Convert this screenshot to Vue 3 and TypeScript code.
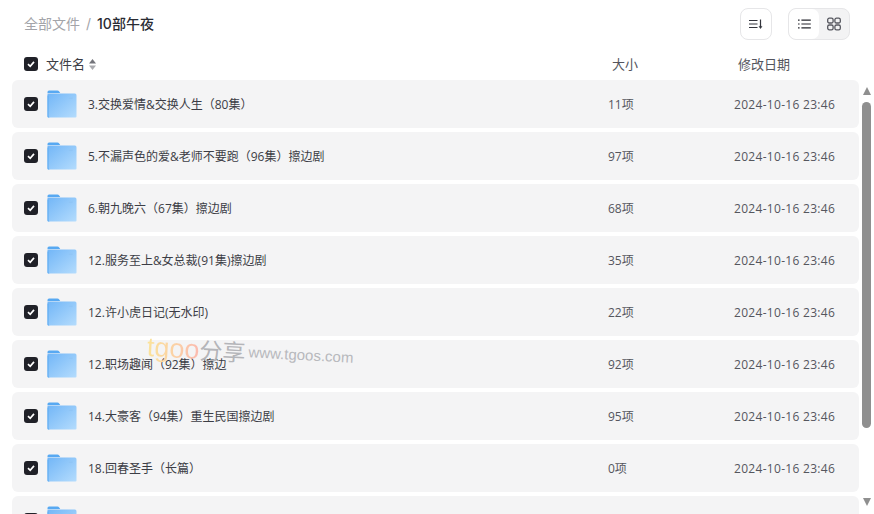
<script setup lang="ts">
interface Row {
  name: string;
  count: string;
}

const date = "2024-10-16 23:46";

const rows: Row[] = [
  { name: "3.交换爱情&交换人生（80集）", count: "11项" },
  { name: "5.不漏声色的爱&老师不要跑（96集）擦边剧", count: "97项" },
  { name: "6.朝九晚六（67集）擦边剧", count: "68项" },
  { name: "12.服务至上&女总裁(91集)擦边剧", count: "35项" },
  { name: "12.许小虎日记(无水印)", count: "22项" },
  { name: "12.职场趣闻（92集）擦边", count: "92项" },
  { name: "14.大豪客（94集）重生民国擦边剧", count: "95项" },
  { name: "18.回春圣手（长篇）", count: "0项" },
  { name: "", count: "" },
];
</script>

<template>
  <div class="page">
    <header class="topbar">
      <nav class="crumbs">
        <span class="crumb-root">全部文件</span>
        <span class="crumb-sep">/</span>
        <span class="crumb-cur">10部午夜</span>
      </nav>
      <div class="tools">
        <button class="tool-btn sort-btn" type="button">
          <svg width="14" height="10" viewBox="0 0 14 10" fill="none" stroke="#33343c" stroke-width="1.2">
            <path d="M0 1.5h8.5M0 5h8.5M0 8.5h8.5" />
            <path d="M11.5 0.5v7.5" />
            <path d="M10 7.4 11.5 9.6 13 7.4z" fill="#33343c" stroke-width="0.5" />
          </svg>
        </button>
        <div class="view-switch">
          <span class="view-item active">
            <svg width="13" height="10" viewBox="0 0 13 10" fill="none" stroke="#26272e" stroke-width="1.2">
              <path d="M3.4 1.2h9.4M3.4 5h9.4M3.4 8.8h9.4" />
              <path d="M0 1.2h1.6M0 5h1.6M0 8.8h1.6" />
            </svg>
          </span>
          <span class="view-item">
            <svg width="14" height="14" viewBox="0 0 14 14" fill="none" stroke="#55565e" stroke-width="1.3">
              <rect x="0.7" y="1.2" width="5.4" height="4.8" rx="1.6" />
              <rect x="7.9" y="1.2" width="5.4" height="4.8" rx="1.6" />
              <rect x="0.7" y="8" width="5.4" height="4.8" rx="1.6" />
              <rect x="7.9" y="8" width="5.4" height="4.8" rx="1.6" />
            </svg>
          </span>
        </div>
      </div>
    </header>

    <div class="col-head">
      <span class="check">
        <svg width="10" height="10" viewBox="0 0 10 10"><path d="M2 5.2 4.2 7.3 8 2.9" fill="none" stroke="#fff" stroke-width="1.7" /></svg>
      </span>
      <span class="col-name">
        文件名
        <svg class="sort-caret" width="7" height="11" viewBox="0 0 7 11">
          <path d="M3.5 0 7 4.6H0z" fill="#73747a" />
          <path d="M3.5 11 7 6.4H0z" fill="#a9aaae" />
        </svg>
      </span>
      <span class="col-size">大小</span>
      <span class="col-date">修改日期</span>
    </div>

    <div class="body">
      <ul class="list">
        <li v-for="(row, i) in rows" :key="i" class="row">
          <span class="check">
            <svg width="10" height="10" viewBox="0 0 10 10"><path d="M2 5.2 4.2 7.3 8 2.9" fill="none" stroke="#fff" stroke-width="1.7" /></svg>
          </span>
          <svg class="folder" width="30" height="28" viewBox="0 0 30 28">
            <defs>
              <linearGradient id="fold" x1="0" y1="0" x2="1" y2="1">
                <stop offset="0" stop-color="#72b6f7" />
                <stop offset="1" stop-color="#b4dcfd" />
              </linearGradient>
            </defs>
            <path d="M0.5 2a1.5 1.5 0 0 1 1.5-1.5h8.4c.8 0 1.3.3 1.8 1l1 1.5h-12.7z" fill="#58a9f2" />
            <path d="M0.5 3.6h27.4a1.6 1.6 0 0 1 1.6 1.6v21.2a1.1 1.1 0 0 1-1.1 1.1h-26.8a1.1 1.1 0 0 1-1.1-1.1z" fill="url(#fold)" />
            <path d="M0.5 5.5v20.9a1.1 1.1 0 0 0 1.1 1.1h1.2c-1-.2-1.3-.9-1.3-2v-20z" fill="#5aa9f1" />
            <rect x="22" y="7.5" width="3.6" height="1.4" fill="#8fc5f6" />
          </svg>
          <span class="row-name">{{ row.name }}</span>
          <span class="row-size">{{ row.count }}</span>
          <span v-if="row.count" class="row-date">{{ date }}</span>
        </li>
      </ul>
      <div class="scrollbar">
        <span class="arrow up"></span>
        <span class="thumb"></span>
        <span class="arrow down"></span>
      </div>
    </div>

    <div class="watermark">
      <span class="wm-tgoo">tgoo</span><span class="wm-cn">分享</span>
      <span class="wm-url">www.tgoos.com</span>
    </div>
  </div>
</template>

<style>
html,
body {
  margin: 0;
  overflow: hidden;
  background: #fff;
}
</style>

<style scoped>
.page {
  position: relative;
  width: 874px;
  height: 514px;
  overflow: hidden;
  font-family: Inter, "Noto Sans CJK SC", sans-serif;
  color: #33343c;
}

.topbar {
  display: flex;
  justify-content: space-between;
  align-items: center;
  height: 48px;
  padding: 0 24px;
  box-sizing: border-box;
}

.crumbs {
  display: flex;
  align-items: center;
  padding-bottom: 2px;
  font-size: 14px;
}

.crumb-root {
  color: #a3a4a9;
}

.crumb-sep {
  margin: 0 6px;
  color: #a3a4a9;
}

.crumb-cur {
  color: #2a2b33;
  font-weight: 500;
}

.tools {
  display: flex;
  align-items: center;
  gap: 16px;
}

.tool-btn {
  display: flex;
  align-items: center;
  justify-content: center;
  width: 32px;
  height: 32px;
  padding: 0;
  background: #fff;
  border: 1px solid #e6e6e8;
  border-radius: 8px;
}

.view-switch {
  display: flex;
  box-sizing: border-box;
  width: 62px;
  height: 32px;
  background: #f3f3f4;
  border: 1px solid #e6e6e8;
  border-radius: 8px;
  overflow: hidden;
}

.view-item {
  flex: 1;
  display: flex;
  align-items: center;
  justify-content: center;
}

.view-item.active {
  background: #fff;
  border-radius: 7px;
}

.col-head {
  display: flex;
  align-items: center;
  height: 32px;
  padding-left: 24px;
  font-size: 13px;
  color: #54555d;
}

.check {
  flex: none;
  display: flex;
  align-items: center;
  justify-content: center;
  width: 14px;
  height: 14px;
  background: #202128;
  border-radius: 3px;
}

.col-name {
  display: flex;
  align-items: center;
  gap: 4px;
  width: 566px;
  margin-left: 8px;
  padding-bottom: 2px;
  color: #3c3d45;
}

.sort-caret {
  flex: none;
  margin-top: 2px;
}

.col-size {
  width: 126px;
  padding-bottom: 2px;
}

.col-date {
  padding-bottom: 2px;
}

.body {
  display: flex;
  height: 434px;
}

.list {
  flex: none;
  width: 847px;
  margin: 0 0 0 12px;
  padding: 0;
  list-style: none;
  display: flex;
  flex-direction: column;
  gap: 4px;
}

.row {
  flex: none;
  display: flex;
  align-items: center;
  height: 48px;
  padding-left: 12px;
  background: #f4f4f5;
  border-radius: 6px;
  font-family: "Open Sans", "Noto Sans CJK SC", sans-serif;
  font-size: 12px;
  color: #3c3d45;
}

.folder {
  flex: none;
  margin-left: 9px;
}

.row-name {
  width: 520px;
  margin-left: 11px;
}

.row-size {
  width: 126px;
  color: #55565e;
}

.row-date {
  letter-spacing: 0.3px;
  color: #55565e;
}

.scrollbar {
  flex: none;
  display: flex;
  flex-direction: column;
  align-items: center;
  width: 9px;
  margin-left: 3px;
}

.thumb {
  flex: none;
  width: 9px;
  height: 326px;
  margin-top: 7px;
  background: #8f8f8f;
  border-radius: 5px;
}

.arrow {
  flex: none;
  width: 0;
  height: 0;
  border-left: 4.5px solid transparent;
  border-right: 4.5px solid transparent;
}

.arrow.up {
  margin-top: 7px;
  border-bottom: 8px solid #8f8f8f;
}

.arrow.down {
  margin-top: 70px;
  border-top: 8px solid #8f8f8f;
}

.watermark {
  position: absolute;
  left: 148px;
  top: 329px;
  display: flex;
  align-items: baseline;
  pointer-events: none;
  white-space: nowrap;
  transform: rotate(3deg);
  transform-origin: left top;
}

.wm-tgoo {
  font-family: "Liberation Sans", sans-serif;
  font-size: 27px;
  background: linear-gradient(90deg, #fbe39a, #fbd0a6 55%, #fbb9b0);
  -webkit-background-clip: text;
  background-clip: text;
  color: transparent;
}

.wm-cn {
  font-size: 23px;
  color: #b4b5b9;
}

.wm-url {
  position: relative;
  top: -4px;
  margin-left: 3px;
  font-family: "Liberation Sans", sans-serif;
  font-size: 15px;
  color: #b8b9bd;
}
</style>
